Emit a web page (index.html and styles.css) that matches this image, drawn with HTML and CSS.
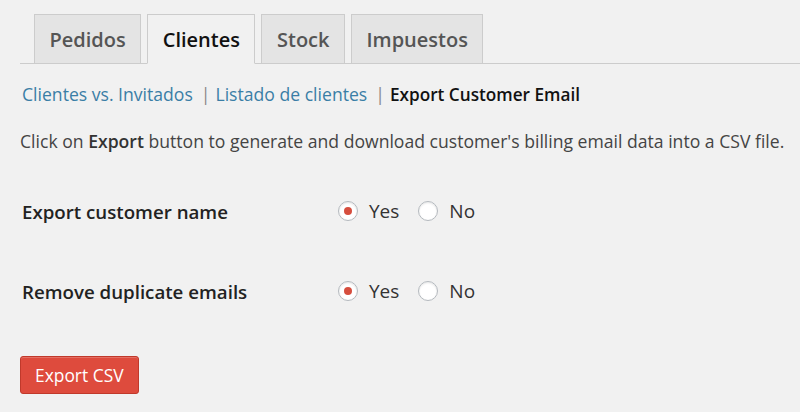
FILE: index.html
```html
<!DOCTYPE html>
<html>
<head>
<meta charset="utf-8">
<link rel="stylesheet" href="styles.css">
</head>
<body>
<div class="wrap">
  <nav class="tabs">
    <a class="tab">Pedidos</a>
    <a class="tab active">Clientes</a>
    <a class="tab">Stock</a>
    <a class="tab">Impuestos</a>
  </nav>
  <ul class="subnav">
    <li><a class="link">Clientes vs. Invitados</a><span class="sep">|</span></li>
    <li><a class="link">Listado de clientes</a><span class="sep">|</span></li>
    <li><span class="current">Export Customer Email</span></li>
  </ul>
  <p class="desc">Click on <b>Export</b> button to generate and download customer's billing email data into a CSV file.</p>
  <div class="form">
    <div class="row">
      <div class="label">Export customer name</div>
      <div class="options">
        <span class="opt"><span class="radio checked"></span>Yes</span>
        <span class="opt"><span class="radio"></span>No</span>
      </div>
    </div>
    <div class="row">
      <div class="label">Remove duplicate emails</div>
      <div class="options">
        <span class="opt"><span class="radio checked"></span>Yes</span>
        <span class="opt"><span class="radio"></span>No</span>
      </div>
    </div>
  </div>
  <button class="btn">Export CSV</button>
</div>
</body>
</html>
```
FILE: styles.css
```css
html, body {
  margin: 0;
  padding: 0;
  background: #f1f1f1;
  font-family: "Open Sans", "Noto Sans", sans-serif;
  color: #444;
}
.wrap {
  padding: 14px 0 0 20px;
}
.tabs {
  display: flex;
  gap: 6px;
  padding-left: 14px;
  border-bottom: 1px solid #ccc;
  height: 49px;
  align-items: flex-end;
}
.tab {
  box-sizing: border-box;
  height: 50px;
  margin-bottom: -1px;
  padding: 0 14.5px;
  display: flex;
  align-items: center;
  font-size: 20px;
  font-weight: 600;
  color: #555;
  background: #e4e4e4;
  border: 1px solid #ccc;
}
.tab.active {
  background: #f1f1f1;
  color: #111;
  border-bottom-color: #f1f1f1;
}
.subnav {
  list-style: none;
  margin: 0;
  padding: 0 0 0 2px;
  display: flex;
  height: 60px;
  align-items: center;
  font-size: 17.6px;
}
.link {
  color: #3a7ea6;
}
.sep {
  color: #888;
  margin: 0 5px 0 8px;
}
.current {
  color: #111;
  font-weight: 600;
  font-size: 17.2px;
}
.desc {
  margin: 0;
  font-size: 17.6px;
  line-height: 24px;
  padding-top: 5px;
  color: #444;
}
.desc b {
  font-weight: 600;
  color: #333;
}
.form {
  padding-top: 46px;
  display: flex;
  flex-direction: column;
  gap: 56px;
}
.row {
  display: flex;
  align-items: center;
  height: 24px;
  padding-left: 2px;
}
.label {
  width: 316px;
  font-size: 18.7px;
  font-weight: 600;
  color: #222;
}
.options {
  display: flex;
  gap: 19px;
}
.opt {
  display: flex;
  align-items: center;
  font-size: 19px;
  color: #333;
}
.radio {
  box-sizing: border-box;
  width: 20px;
  height: 20px;
  border-radius: 50%;
  border: 1px solid #b4b9be;
  background: #fff;
  box-shadow: inset 0 1px 2px rgba(0,0,0,0.1);
  margin-right: 11px;
  display: flex;
  align-items: center;
  justify-content: center;
}
.radio.checked::after {
  content: "";
  width: 8px;
  height: 8px;
  border-radius: 50%;
  background: #d64e3e;
}
.btn {
  margin-top: 53px;
  height: 38px;
  padding: 0 14px;
  font-family: "Open Sans", sans-serif;
  font-size: 17.4px;
  color: #fff;
  background: #de4b3d;
  border: 1px solid #c0392b;
  border-radius: 3px;
  box-shadow: inset 0 1px 0 rgba(255,255,255,0.2);
}
```
